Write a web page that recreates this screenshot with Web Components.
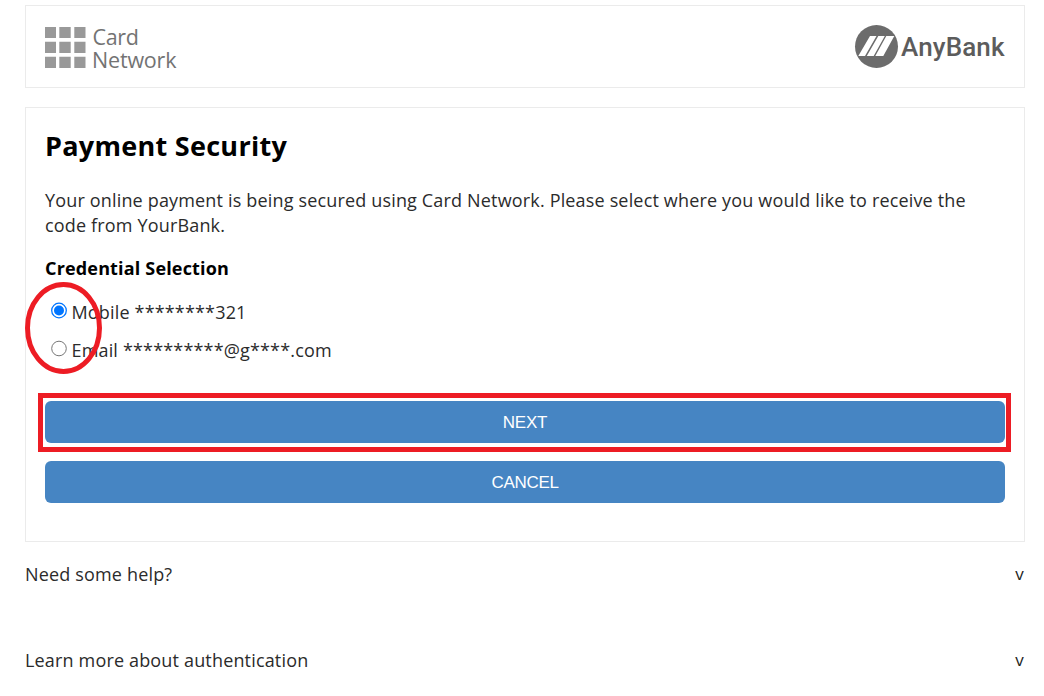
<!DOCTYPE html>
<html lang="en">
<head>
<meta charset="utf-8">
<title>Payment Security</title>
<style>
  body {
    margin: 0;
    background: #fff;
    color: #2b2b2b;
    font: 18px/25px "Open Sans", "Noto Sans", sans-serif;
    letter-spacing: 0.165px;
  }
</style>
</head>
<body>
<payment-page>
  <brand-header></brand-header>
  <challenge-card heading="Payment Security" label="Credential Selection">
    <span slot="info">Your online payment is being secured using Card Network. Please select where you would like to receive the code from YourBank.</span>
    <credential-list slot="options">
      <credential-option checked>Mobile ********321</credential-option>
      <credential-option>Email **********@g****.com</credential-option>
    </credential-list>
    <action-button slot="actions" marked>NEXT</action-button>
    <action-button slot="actions">CANCEL</action-button>
  </challenge-card>
  <help-row>Need some help?</help-row>
  <help-row>Learn more about authentication</help-row>
</payment-page>

<script>
class PaymentPage extends HTMLElement {
  constructor() {
    super();
    this.attachShadow({ mode: 'open' });
    this.shadowRoot.innerHTML = `
      <style>
        :host {
          display: block;
          box-sizing: border-box;
          height: 696px;
          padding: 5px 19px 0 25px;
          overflow: hidden;
        }
      </style>
      <slot></slot>
    `;
  }
}

class BrandHeader extends HTMLElement {
  constructor() {
    super();
    this.attachShadow({ mode: 'open' });
    this.shadowRoot.innerHTML = `
      <style>
        :host {
          display: flex;
          justify-content: space-between;
          align-items: flex-start;
          box-sizing: border-box;
          height: 83px;
          padding: 19px;
          border: 1px solid #ebebeb;
          letter-spacing: 0;
        }
        svg {
          display: block;
          overflow: visible;
        }
        .network {
          font: 21.5px "Open Sans", sans-serif;
          fill: #737373;
        }
        .bank {
          font: 500 26px Roboto, sans-serif;
          fill: #5c5c5c;
        }
      </style>
      <svg class="network" width="134" height="46" viewBox="0 0 134 46">
        <g fill="#999">
          <path d="M0 2h11v11H0zM14.300 2h11.400v11h-11.400zM29.300 2h11.200v11h-11.200z"/>
          <path d="M0 16.800h11v11.200H0zM14.300 16.800h11.400v11.200h-11.400zM29.300 16.800h11.200v11.200h-11.200z"/>
          <path d="M0 31.700h11v11.300H0zM14.300 31.700h11.400v11.300h-11.400zM29.300 31.700h11.200v11.300h-11.200z"/>
        </g>
        <text x="47.500" y="20" textLength="46.500">Card</text>
        <text x="47" y="42.700" textLength="84.500">Network</text>
      </svg>
      <svg class="bank" width="151" height="46" viewBox="0 0 151 46">
        <circle cx="22.500" cy="21.500" r="21.500" fill="#6c6c6c"/>
        <path fill="#fff" d="M16 11h6.500L11 31H4.300zM24.300 11h6.500L19.700 31h-6.900zM32.300 11h8L29.300 31h-8z"/>
        <text x="47" y="30.500" textLength="103.500">AnyBank</text>
      </svg>
    `;
  }
}

class ChallengeCard extends HTMLElement {
  constructor() {
    super();
    this.attachShadow({ mode: 'open' });
    this.shadowRoot.innerHTML = `
      <style>
        :host {
          display: block;
          box-sizing: border-box;
          height: 435px;
          margin-top: 19px;
          padding: 19px;
          border: 1px solid #ebebeb;
        }
        h1 {
          margin: 0 0 23px;
          color: #000;
          font-size: 27px;
          font-weight: 700;
          line-height: 38px;
          letter-spacing: 0.28px;
        }
        p {
          margin: 0;
        }
        h2 {
          margin: 18px 0 0;
          color: #000;
          font-size: 18px;
          font-weight: 700;
          line-height: 25px;
        }
        .actions {
          display: grid;
          gap: 18px;
          margin-top: 31px;
        }
      </style>
      <h1></h1>
      <p><slot name="info"></slot></p>
      <h2></h2>
      <slot name="options"></slot>
      <div class="actions"><slot name="actions"></slot></div>
    `;
  }

  connectedCallback() {
    this.shadowRoot.querySelector('h1').textContent = this.getAttribute('heading');
    this.shadowRoot.querySelector('h2').textContent = this.getAttribute('label');
  }
}

class CredentialList extends HTMLElement {
  constructor() {
    super();
    this.attachShadow({ mode: 'open' });
    this.shadowRoot.innerHTML = `
      <style>
        :host {
          display: block;
          position: relative;
          padding-top: 13px;
        }
        /* ring over the radio buttons */
        svg {
          position: absolute;
          left: -20px;
          top: 1px;
          pointer-events: none;
        }
      </style>
      <slot></slot>
      <svg width="77" height="92" viewBox="0 0 77 92">
        <ellipse cx="38.500" cy="46" rx="36" ry="43.500" fill="none" stroke="#ed1c24" stroke-width="5"/>
      </svg>
    `;
  }
}

class CredentialOption extends HTMLElement {
  constructor() {
    super();
    this.attachShadow({ mode: 'open' });
    this.shadowRoot.innerHTML = `
      <style>
        :host {
          display: block;
          height: 38px;
        }
        label {
          display: flex;
          align-items: center;
          gap: 4px;
          padding: 6px 0 0 5.5px;
        }
        svg {
          display: block;
          margin-top: -4px;
        }
        .dot {
          display: none;
        }
        .ring {
          fill: #fff;
          stroke: #767676;
        }
        :host([checked]) .dot {
          display: inline;
          fill: #0075ff;
        }
        :host([checked]) .ring {
          stroke: #0075ff;
          stroke-width: 1.3;
        }
      </style>
      <label>
        <svg width="17" height="17" viewBox="0 0 17 17">
          <circle class="ring" cx="8" cy="8.500" r="7.300"/>
          <circle class="dot" cx="8" cy="8.500" r="5"/>
        </svg>
        <span><slot></slot></span>
      </label>
    `;
  }
}

class ActionButton extends HTMLElement {
  constructor() {
    super();
    this.attachShadow({ mode: 'open' });
    this.shadowRoot.innerHTML = `
      <style>
        :host {
          display: block;
          position: relative;
        }
        button {
          display: block;
          width: 100%;
          height: 42px;
          padding: 2px 0 0;
          border: 0;
          border-radius: 6px;
          background: #4685c3;
          color: #fff;
          font: 17px "Liberation Sans", Arial, sans-serif;
          letter-spacing: -0.3px;
        }
        :host([marked]) button {
          padding-top: 1px;
          letter-spacing: -0.2px;
        }
        :host([marked])::after {
          content: "";
          position: absolute;
          inset: -8px -6px -9px -7px;
          border: 5px solid #ed1c24;
          pointer-events: none;
        }
      </style>
      <button type="button"><slot></slot></button>
    `;
  }
}

class HelpRow extends HTMLElement {
  constructor() {
    super();
    this.attachShadow({ mode: 'open' });
    this.shadowRoot.innerHTML = `
      <style>
        :host {
          display: flex;
          justify-content: space-between;
          height: 66px;
          padding-top: 20px;
        }
        .arrow {
          margin: -1px 1px 0 0;
          color: #222;
          font-size: 17px;
        }
      </style>
      <span><slot></slot></span>
      <span class="arrow">v</span>
    `;
  }
}

customElements.define('payment-page', PaymentPage);
customElements.define('brand-header', BrandHeader);
customElements.define('challenge-card', ChallengeCard);
customElements.define('credential-list', CredentialList);
customElements.define('credential-option', CredentialOption);
customElements.define('action-button', ActionButton);
customElements.define('help-row', HelpRow);
</script>
</body>
</html>
